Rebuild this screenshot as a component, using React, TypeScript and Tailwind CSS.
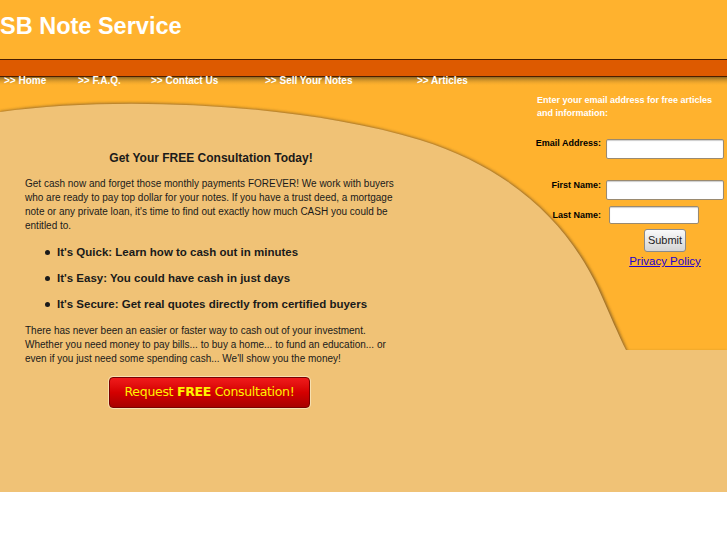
import React from "react";

const navItems = [
  { label: ">> Home", w: "w-[74px]" },
  { label: ">> F.A.Q.", w: "w-[73px]" },
  { label: ">> Contact Us", w: "w-[114px]" },
  { label: ">> Sell Your Notes", w: "w-[152px]" },
  { label: ">> Articles", w: "w-[80px]" },
];

const bullets = [
  "It's Quick: Learn how to cash out in minutes",
  "It's Easy: You could have cash in just days",
  "It's Secure: Get real quotes directly from certified buyers",
];

function Backdrop() {
  // tan content shape with the curved top edge and its soft shadow
  return (
    <svg
      className="absolute inset-0 w-full h-full"
      viewBox="0 77 727 415"
      preserveAspectRatio="none"
    >
      <defs>
        <filter id="blur" x="-10%" y="-10%" width="120%" height="120%">
          <feGaussianBlur stdDeviation="1.6" />
        </filter>
        <linearGradient id="navShade" x1="0" y1="0" x2="0" y2="1">
          <stop offset="0" stopColor="#7a5a20" stopOpacity="0.85" />
          <stop offset="1" stopColor="#ffb22e" stopOpacity="0" />
        </linearGradient>
      </defs>
      <rect x="0" y="77" width="727" height="9" fill="url(#navShade)" />
      <path
        d="M0,112 C120,95 300,104 420,140 C515,170 568,225 598,288 C610,315 619,336 626,352 L727,352"
        fill="none"
        stroke="#5e4522"
        strokeWidth="5"
        strokeOpacity="0.7"
        filter="url(#blur)"
        transform="translate(0,2)"
      />
      <path
        d="M0,112 C120,95 300,104 420,140 C515,170 568,225 598,288 C610,315 619,336 626,350 L727,350 L727,492 L0,492 Z"
        fill="#f0c276"
      />
    </svg>
  );
}

export default function App() {
  return (
    <div
      className="w-full min-h-[545px] bg-white"
      style={{ fontFamily: '"Liberation Sans", Arial, sans-serif' }}
    >
      <div className="bg-[#ffb22e]">
        {/* header */}
        <div className="h-[59px] flex items-center pb-[5px]">
          <h1 className="text-white font-bold text-[23.5px] leading-none">SB Note Service</h1>
        </div>
        <div className="h-[18px] bg-[#dd5a00] border-y border-[#4a1e00]" />

        <div className="relative h-[415px]">
          <Backdrop />
          <div className="relative">
            {/* nav */}
            <nav className="flex pl-[4px] h-[7px] items-center text-white font-bold text-[10px] leading-none">
              {navItems.map((n) => (
                <a key={n.label} className={`${n.w} shrink-0`}>
                  {n.label}
                </a>
              ))}
            </nav>

            <div className="flex">
              {/* main column */}
              <div className="w-[537px] shrink-0 pl-[25px] pr-[140px] text-[#1a1a1a]">
                <h2 className="mt-[67px] text-center font-bold text-[12px] leading-[14px]">
                  Get Your FREE Consultation Today!
                </h2>
                <p className="mt-[12px] text-[10px] leading-[14px]">
                  Get cash now and forget those monthly payments FOREVER! We work with buyers who are
                  ready to pay top dollar for your notes. If you have a trust deed, a mortgage note or
                  any private loan, it's time to find out exactly how much CASH you could be entitled to.
                </p>
                <ul className="mt-[12px] pl-[32px] flex flex-col gap-[12px]">
                  {bullets.map((b) => (
                    <li key={b} className="flex items-center font-bold text-[11.5px] leading-[14px]">
                      <span className="w-[5px] h-[5px] rounded-full bg-[#1a1a1a] -ml-[12px] mr-[7px]" />
                      {b}
                    </li>
                  ))}
                </ul>
                <p className="mt-[13px] text-[10px] leading-[14px]">
                  There has never been an easier or faster way to cash out of your investment. Whether
                  you need money to pay bills... to buy a home... to fund an education... or even if you
                  just need some spending cash... We'll show you the money!
                </p>
                <div className="mt-[11px] pl-[84px]">
                  <button
                    className="w-[201px] h-[31px] rounded-[4px] border border-[#7a0000] bg-gradient-to-b from-[#f01a1a] via-[#d40000] to-[#a80000] shadow-[0_0_0_1px_#f7e0b0] text-[#fff200] text-[12.5px] leading-none"
                    style={{ fontFamily: '"DejaVu Sans", "Open Sans", sans-serif', letterSpacing: "-0.3px" }}
                  >
                    Request <span className="font-bold">FREE</span> Consultation!
                  </button>
                </div>
              </div>

              {/* signup column */}
              <div className="flex-1 pt-[10px]">
                <p className="text-white font-bold text-[9px] leading-[13px] pr-[10px]">
                  Enter your email address for free articles and information:
                </p>
                <div className="mt-[19px] flex items-start">
                  <label className="w-[64px] flex justify-end whitespace-nowrap font-bold text-[9px] leading-none text-black">
                    Email Address:
                  </label>
                  <input className="ml-[5px] w-[118px] h-[20px] bg-white border border-[#9a8a70] rounded-[2px] shadow-[inset_0_1px_1px_rgba(0,0,0,0.2)]" />
                </div>
                <div className="mt-[21px] flex items-start">
                  <label className="w-[64px] flex justify-end whitespace-nowrap font-bold text-[9px] leading-none text-black pt-[1px]">
                    First Name:
                  </label>
                  <input className="ml-[5px] w-[118px] h-[20px] bg-white border border-[#9a8a70] rounded-[2px] shadow-[inset_0_1px_1px_rgba(0,0,0,0.2)]" />
                </div>
                <div className="mt-[6px] flex items-center">
                  <label className="w-[64px] flex justify-end whitespace-nowrap font-bold text-[9px] leading-none text-black">
                    Last Name:
                  </label>
                  <input className="ml-[8px] w-[90px] h-[18px] bg-white border border-[#9a8a70] rounded-[2px] shadow-[inset_0_1px_1px_rgba(0,0,0,0.2)]" />
                </div>
                <div className="ml-[69px] w-[118px] flex flex-col items-center">
                  <button className="mt-[5px] h-[23px] px-[3px] rounded-[3px] border border-[#8a8a8a] bg-gradient-to-b from-[#fafafa] to-[#d4d4d4] text-[11px] text-[#222]">
                    Submit
                  </button>
                  <a className="mt-[2px] text-[11.5px] leading-[14px] text-[#2200cc] underline">
                    Privacy Policy
                  </a>
                </div>
              </div>
            </div>
          </div>
        </div>
      </div>
    </div>
  );
}
